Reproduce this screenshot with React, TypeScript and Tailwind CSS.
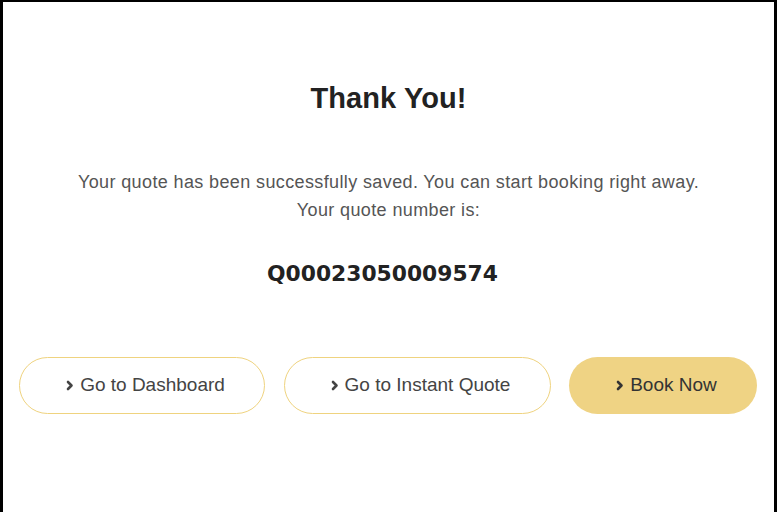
import React from 'react';

const Chevron: React.FC = () => (
    <svg width="8" height="11" viewBox="0 0 8 11" className="shrink-0">
        <path d="M2 2l3.5 3.5L2 9" fill="none" stroke="currentColor" strokeWidth="2.6" strokeLinecap="round" strokeLinejoin="round" />
    </svg>
);

const buttons = [
    { label: 'Go to Dashboard', filled: false, w: 'w-[246px]' },
    { label: 'Go to Instant Quote', filled: false, w: 'w-[267px]' },
    { label: 'Book Now', filled: true, w: 'w-[188px]' },
];

const App: React.FC = () => {
    return (
        <div className="h-[512px] w-[777px] bg-white border-black border-t-[2px] border-l-[3px] border-r-[3px] font-['Liberation_Sans',Arial,sans-serif]">
            <div className="flex flex-col items-center pt-[80px]">
                <h1 className="text-[29px] font-bold leading-[32px] text-[#222] tracking-[0.1px]">Thank You!</h1>
                <div className="mt-[54px] text-center text-[18px] leading-[28px] text-[#555] tracking-[0.38px]">
                    <p>Your quote has been successfully saved. You can start booking right away.</p>
                    <p>Your quote number is:</p>
                </div>
                <div className="mt-[36px] pr-[12px] font-['DejaVu_Sans',sans-serif] text-[21.8px] font-bold leading-[28px] text-[#222]">
                    Q00023050009574
                </div>
            </div>
            <div className="mt-[69px] flex items-center justify-between pl-[16px] pr-[17px]">
                {buttons.map((b) => (
                    <button
                        key={b.label}
                        className={`${b.w} flex h-[57px] items-center justify-center gap-[6px] rounded-full pl-[7px] text-[19px] ${
                            b.filled
                                ? 'bg-[#EFD384] text-[#333]'
                                : 'border-[1.5px] border-[#EFD37F] bg-white text-[#444]'
                        }`}
                    >
                        <Chevron />
                        <span>{b.label}</span>
                    </button>
                ))}
            </div>
        </div>
    );
};

export default App;
